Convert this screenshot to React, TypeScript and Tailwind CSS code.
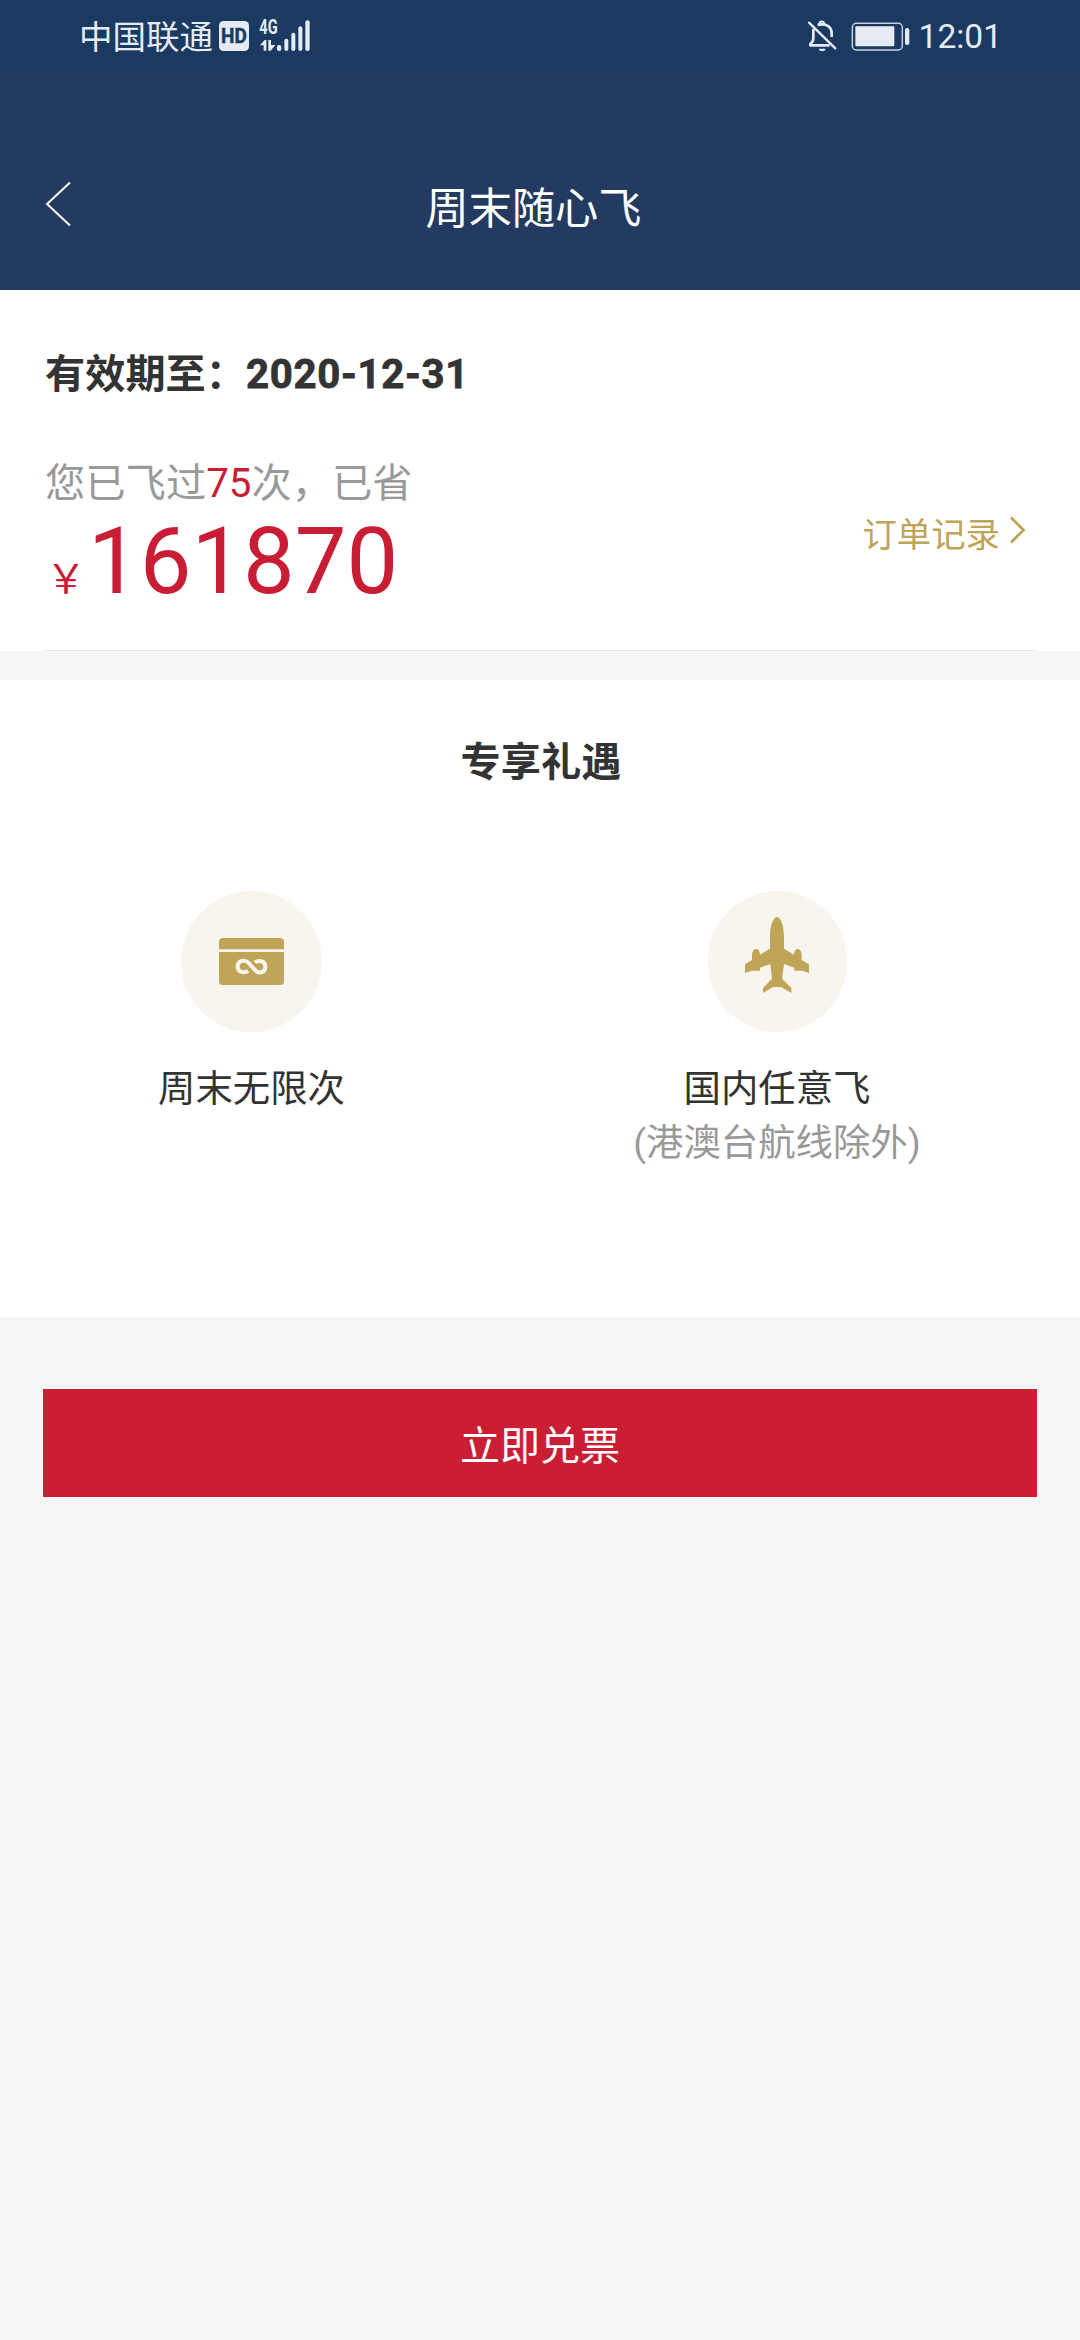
import React from 'react';

const BellOffIcon = () => (
  <svg viewBox="80 58 92 100" className="w-[30.67px] h-[33.33px]" fill="none" stroke="#e6ebf3" strokeWidth="8">
    <path d="M99 88 V116 C99 125 97 128 90 133 V137 H148" strokeLinejoin="round" />
    <path d="M112 76 C137 69 154 82 154 101 V112" />
    <path d="M117 75 C115 62 133 62 132 75" strokeWidth="6" />
    <path d="M86 69 L165 146" strokeLinecap="round" strokeWidth="7" />
    <path d="M115 147 H136 C133 157 118 157 115 147 Z" fill="#e6ebf3" stroke="none" />
  </svg>
);

const BatteryIcon = () => (
  <svg viewBox="214 66 178 88" className="w-[59.33px] h-[29.33px]">
    <rect x="218" y="70" width="150" height="80" rx="12" fill="none" stroke="#c3cfde" strokeWidth="4.5" />
    <rect x="227" y="79" width="117" height="60" rx="3" fill="#e6ebf3" />
    <rect x="376" y="84" width="13" height="51" rx="6" fill="#e6ebf3" />
  </svg>
);

const HdBadge = () => (
  <svg viewBox="0 0 30 30" className="w-[30px] h-[30px]">
    <rect width="30" height="30" rx="4.5" fill="#e6ebf3" />
    <text transform="translate(2 22) scale(0.95 1)" fontFamily="Roboto" fontWeight="700" fontSize="20" fill="#1b3a61" stroke="#1b3a61" strokeWidth="0.5">HD</text>
  </svg>
);

const SignalIcon = () => (
  <svg viewBox="596 28 156 130" className="w-[52px] h-[43.33px]" fill="#e6ebf3">
    <text x="597" y="104" fontFamily="Roboto" fontWeight="700" fontSize="58" textLength="55" lengthAdjust="spacingAndGlyphs">4G</text>
    <path d="M599 137 L613 121 H618 V153 H610 V137 Z" />
    <path d="M624 121 H632 V136 H645 L631 153 H624 Z" />
    <rect x="650" y="136" width="13" height="18" rx="6" />
    <rect x="672" y="117" width="12" height="37" rx="6" />
    <rect x="693" y="99" width="12" height="55" rx="6" />
    <rect x="714" y="80" width="12" height="74" rx="6" />
    <rect x="735" y="62" width="13" height="92" rx="6" />
  </svg>
);

const CardIcon = () => (
  <svg viewBox="0 0 195 141" className="w-[65px] h-[47px]">
    <path d="M0 34 V12 Q0 0 12 0 H183 Q195 0 195 12 V34 Z" fill="#c0a458" />
    <path d="M0 42 H195 V129 Q195 141 183 141 H12 Q0 141 0 129 Z" fill="#c0a458" />
    <path
      d="M87 98 C78 106 56 104 56 86 C56 67 78 64 88 74 L108 96 C118 108 139 105 139 86 C139 68 117 65 108 74"
      fill="none"
      stroke="#f8f5ee"
      strokeWidth="12"
    />
  </svg>
);

const PlaneIcon = () => (
  <svg viewBox="435 141 192 228" className="w-[64px] h-[76px] mb-[13px]" fill="#c0a458">
    <path d="M531 141 C543 141 552 169 552 202 V236 L582 254 C582 231 605 231 605 257 V270 L627 283 V309 L606 302 H583 V293 L552 282 L546 326 L574 354 V369 L543 351 H519 L489 369 V354 L516 326 L511 282 L480 293 V302 H456 L435 309 V283 L456 270 V257 C456 231 480 231 480 254 L510 236 V202 C510 169 519 141 531 141 Z" />
  </svg>
);

const benefits = [
  { title: '周末无限次', note: '', icon: CardIcon, width: 'w-[503px]', circle: 'w-[141px]' },
  { title: '国内任意飞', note: '(港澳台航线除外)', icon: PlaneIcon, width: 'w-[548px]', circle: 'w-[139px]' },
];

const App: React.FC = () => {
  return (
    <div className="w-[1080px] h-[2340px] bg-[#f6f6f6] overflow-hidden font-['Roboto','Noto_Sans_CJK_SC',sans-serif] text-[#333333]">
      {/* Status bar */}
      <div className="h-[72px] bg-[#1b3a61] flex items-start justify-between pl-[79px] pr-[78px] text-[#e6ebf3]">
        <div className="flex items-start">
          <span className="text-[33.5px] leading-[40px] mt-[18px]">中国联通</span>
          <div className="mt-[21px] ml-[6px]"><HdBadge /></div>
          <div className="mt-[9.3px] ml-[9.7px]"><SignalIcon /></div>
        </div>
        <div className="flex items-start">
          <div className="mt-[19.3px]"><BellOffIcon /></div>
          <div className="mt-[22px] ml-[14px]"><BatteryIcon /></div>
          <span className="text-[33.5px] leading-[40px] mt-[17px] ml-[8px]">12:01</span>
        </div>
      </div>

      {/* Title bar */}
      <header className="h-[218px] bg-[#233b60] flex items-start pl-[45px] text-white">
        <svg viewBox="0 0 26 46" className="w-[26px] h-[46px] mt-[109px]" fill="none" stroke="white" strokeWidth="2">
          <path d="M25 1.5 L2 23 L25 44.5" />
        </svg>
        <h1 className="flex-1 pr-[84px] mt-[108px] text-center text-[43.2px] leading-[60px]">周末随心飞</h1>
      </header>

      <section className="h-[361px] bg-white px-[45px]">
        <div className="h-full border-b border-[#e6e6e6] pt-[55px]">
          <p className="text-[40.2px] leading-[60px] font-bold">
            有效期至：<span className="tracking-[0.7px] [-webkit-text-stroke:0.8px_#333333]">2020-12-31</span>
          </p>
          <div className="flex justify-between">
            <div className="pt-[49px]">
              <p className="text-[40.3px] leading-[60px] text-[#999999]">
                您已飞过<span className="text-[#c91d35]">75</span>次，已省
              </p>
              <p className="flex items-baseline pt-[2px] text-[#c91d35] leading-[92px]">
                <span className="text-[40px] pl-px">￥</span>
                <span className="text-[92px] pl-[2px]">161870</span>
              </p>
            </div>
            <div className="flex items-start pt-[105px] pr-[9px] text-[#c0a458]">
              <span className="text-[34.4px] leading-[50px]">订单记录</span>
              <svg viewBox="0 0 16 28" className="w-[16px] h-[28px] mt-[6px] ml-[10px]" fill="none" stroke="currentColor" strokeWidth="2.8">
                <path d="M1 1.5 L13.5 14 L1 26.5" />
              </svg>
            </div>
          </div>
        </div>
      </section>

      <section className="mt-[29px] h-[637px] bg-white pt-[53px]">
        <h2 className="text-[40.2px] leading-[60px] font-bold text-center pl-[2px]">专享礼遇</h2>
        <div className="flex mt-[98px]">
          {benefits.map((item) => {
            const Icon = item.icon;
            return (
              <div key={item.title} className={`${item.width} flex flex-col items-center text-[37.4px] leading-[54px]`}>
                <div className={`${item.circle} h-[141px] rounded-full bg-[#f8f5ee] flex items-center justify-center`}>
                  <Icon />
                </div>
                <p className="mt-[30px]">{item.title}</p>
                {item.note && <p className="text-[#999999]">{item.note}</p>}
              </div>
            );
          })}
        </div>
      </section>

      <button className="block mt-[72px] mx-[43px] w-[994px] h-[108px] pt-[8px] bg-[#cb1d34] text-white text-[40px] leading-[60px]">
        立即兑票
      </button>
    </div>
  );
};

export default App;
